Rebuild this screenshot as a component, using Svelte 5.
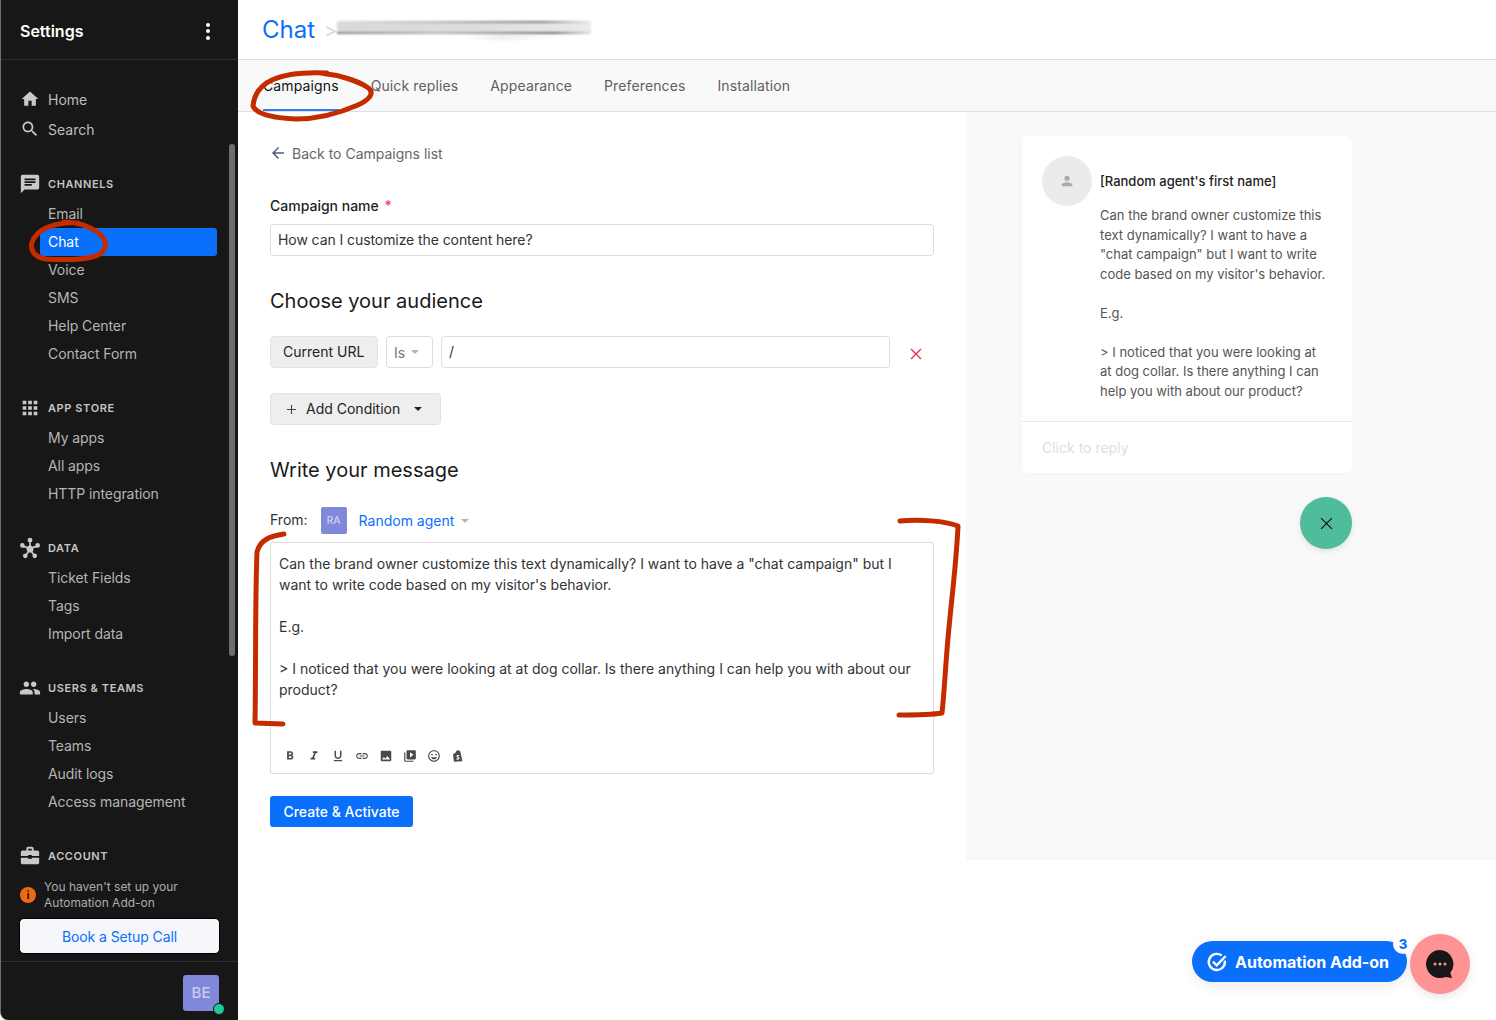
<script>
  const icons = {
    home: "M10 20v-6h4v6h5v-8h3L12 3 2 12h3v8z",
    search: "M15.5 14h-.79l-.28-.27C15.41 12.59 16 11.11 16 9.5 16 5.91 13.09 3 9.5 3S3 5.91 3 9.5 5.91 16 9.5 16c1.61 0 3.09-.59 4.23-1.57l.27.28v.79l5 4.99L20.49 19l-4.99-5zm-6 0C7.01 14 5 11.99 5 9.5S7.01 5 9.5 5 14 7.01 14 9.5 11.99 14 9.5 14z",
    chat: "M20 2H4c-1.1 0-1.99.9-1.99 2L2 22l4-4h14c1.1 0 2-.9 2-2V4c0-1.1-.9-2-2-2zM6 9h12v2H6V9zm8 5H6v-2h8v2zm4-6H6V6h12v2z",
    apps: "M4 8h4V4H4v4zm6 12h4v-4h-4v4zm-6 0h4v-4H4v4zm0-6h4v-4H4v4zm6 0h4v-4h-4v4zm6-10v4h4V4h-4zm-6 4h4V4h-4v4zm6 6h4v-4h-4v4zm0 6h4v-4h-4v4z",
    data: "M9.7 4.6a2.3 2.3 0 1 1 4.6 0a2.3 2.3 0 1 1-4.6 0zM2.5 9.5a2.2 2.2 0 1 1 4.4 0a2.2 2.2 0 1 1-4.4 0zM17.1 9.5a2.2 2.2 0 1 1 4.4 0a2.2 2.2 0 1 1-4.4 0zM5.3 19.5a2.2 2.2 0 1 1 4.4 0a2.2 2.2 0 1 1-4.4 0zM14.3 19.5a2.2 2.2 0 1 1 4.4 0a2.2 2.2 0 1 1-4.4 0zM11.2 5h1.6v6h-1.6zM5 9l5 2-.6 1.5-5-2zM19 9l.6 1.5-5 2-.6-1.5zM9.7 15.3l1.3.9-2.3 3.2-1.3-.9zM13 16.2l1.3-.9 2.3 3.2-1.3.9zM12 9l3.8 2.8-1.4 4.5h-4.8l-1.4-4.5z",
    people: "M16 11c1.66 0 2.99-1.34 2.99-3S17.66 5 16 5c-1.66 0-3 1.34-3 3s1.34 3 3 3zm-8 0c1.66 0 2.99-1.34 2.99-3S9.66 5 8 5C6.34 5 5 6.34 5 8s1.34 3 3 3zm0 2c-2.33 0-7 1.17-7 3.5V19h14v-2.5c0-2.33-4.67-3.5-7-3.5zm8 0c-.29 0-.62.02-.97.05 1.16.84 1.97 1.97 1.97 3.45V19h6v-2.5c0-2.33-4.67-3.5-7-3.5z",
    work: "M20 6h-4V4c0-1.11-.89-2-2-2h-4c-1.11 0-2 .89-2 2v2H4C2.89 6 2 6.89 2 8v4h8v-1h4v1h8V8c0-1.11-.89-2-2-2zm-6 0h-4V4h4v2zM14 14v1h-4v-1H2v5c0 1.11.89 2 2 2h16c1.11 0 2-.89 2-2v-5z",
    person: "M12 12c2.21 0 4-1.79 4-4s-1.79-4-4-4-4 1.79-4 4 1.79 4 4 4zm0 2c-2.67 0-8 1.34-8 4v2h16v-2c0-2.66-5.33-4-8-4z"
  };

  const tools = [
    "M15.6 10.79c.97-.67 1.65-1.77 1.65-2.79 0-2.26-1.75-4-4-4H7v14h7.04c2.09 0 3.71-1.7 3.71-3.79 0-1.52-.86-2.82-2.15-3.42zM10 6.5h3c.83 0 1.5.67 1.5 1.5s-.67 1.5-1.5 1.5h-3v-3zm3.5 9H10v-3h3.5c.83 0 1.5.67 1.5 1.5s-.67 1.5-1.5 1.5z",
    "M10 4v3h2.21l-3.42 8H6v3h8v-3h-2.21l3.42-8H18V4z",
    "M12 17c3.31 0 6-2.69 6-6V3h-2.5v8c0 1.93-1.57 3.5-3.5 3.5S8.5 12.93 8.5 11V3H6v8c0 3.31 2.69 6 6 6zm-7 2v2h14v-2H5z",
    "M3.9 12c0-1.71 1.39-3.1 3.1-3.1h4V7H7c-2.76 0-5 2.24-5 5s2.24 5 5 5h4v-1.9H7c-1.71 0-3.1-1.39-3.1-3.1zM8 13h8v-2H8v2zm9-6h-4v1.9h4c1.71 0 3.1 1.39 3.1 3.1s-1.39 3.1-3.1 3.1h-4V17h4c2.76 0 5-2.24 5-5s-2.24-5-5-5z",
    "M21 19V5c0-1.1-.9-2-2-2H5c-1.1 0-2 .9-2 2v14c0 1.1.9 2 2 2h14c1.1 0 2-.9 2-2zM8.5 13.5l2.5 3.01L14.5 12l4.5 6H5l3.5-4.5z",
    "M4 6H2v14c0 1.1.9 2 2 2h14v-2H4V6zm16-4H8c-1.1 0-2 .9-2 2v12c0 1.1.9 2 2 2h12c1.1 0 2-.9 2-2V4c0-1.1-.9-2-2-2zm-8 12.5v-9l6 4.5-6 4.5z",
    "M11.99 2C6.47 2 2 6.48 2 12s4.47 10 9.99 10C17.52 22 22 17.52 22 12S17.52 2 11.99 2zM12 20c-4.42 0-8-3.58-8-8s3.58-8 8-8 8 3.58 8 8-3.58 8-8 8zm3.5-9a1.5 1.5 0 1 0 0-3 1.5 1.5 0 0 0 0 3zm-7 0a1.5 1.5 0 1 0 0-3 1.5 1.5 0 0 0 0 3zm3.5 6.5c2.33 0 4.31-1.46 5.11-3.5H6.89c.8 2.04 2.78 3.5 5.11 3.5z",
    "M4.5 8l3-1C8 4 10 2 12 2c1.4 0 2.2.8 2.6 2l1.4-.3L19.5 21 5 22 3.5 9.5zM9.7 6.3c.5-1.5 1.3-2.5 2.3-2.5.8 0 1.1.8 1.1 1.5zM14.5 10.5c-2.8-1-5-.1-5 2 0 2.2 3 2.2 3 3.3 0 .8-1.6.7-2.9 0l-.5 2c2.8 1.3 5.5.3 5.5-2.2 0-2.2-2.9-2.3-2.9-3.2 0-.6 1-.7 2.3-.2z"
  ];

  const sections = [
    { title: "CHANNELS", icon: "chat", items: ["Email", "Chat", "Voice", "SMS", "Help Center", "Contact Form"] },
    { title: "APP STORE", icon: "apps", items: ["My apps", "All apps", "HTTP integration"] },
    { title: "DATA", icon: "data", items: ["Ticket Fields", "Tags", "Import data"] },
    { title: "USERS & TEAMS", icon: "people", items: ["Users", "Teams", "Audit logs", "Access management"] }
  ];

  const tabs = ["Campaigns", "Quick replies", "Appearance", "Preferences", "Installation"];
  const message = "Can the brand owner customize this text dynamically? I want to have a \"chat campaign\" but I want to write code based on my visitor's behavior.\n\nE.g.\n\n> I noticed that you were looking at at dog collar. Is there anything I can help you with about our product?";
</script>

<div class="page">
  <aside class="sidebar">
    <div class="side-head">
      <span class="side-title">Settings</span>
      <span class="dots"><i></i><i></i><i></i></span>
    </div>

    <nav class="side-nav">
      <div class="top-links">
        <div class="top-link"><svg viewBox="0 0 24 24"><path d={icons.home} /></svg>Home</div>
        <div class="top-link"><svg viewBox="0 0 24 24"><path d={icons.search} /></svg>Search</div>
      </div>

      {#each sections as section}
        <div class="section">
          <div class="section-title">
            <svg viewBox={section.icon === "data" ? "1.5 1.5 21 21" : "0 0 24 24"}><path d={icons[section.icon]} /></svg>{section.title}
          </div>
          {#each section.items as item}
            <div class="nav-item" class:active={item === "Chat"}>{item}</div>
          {/each}
        </div>
      {/each}

      <div class="section account">
        <div class="section-title"><svg viewBox="0 0 24 24"><path d={icons.work} /></svg>ACCOUNT</div>
      </div>
    </nav>

    <div class="setup-note">
      <span class="info">i</span>
      <span>You haven't set up your<br />Automation Add-on</span>
    </div>
    <button class="setup-btn">Book a Setup Call</button>

    <div class="side-foot">
      <div class="me">BE<span class="online"></span></div>
    </div>

    <div class="scroll-thumb"></div>
  </aside>

  <main class="main">
    <header class="top">
      <span class="crumb">Chat</span>
      <span class="crumb-sep">&gt;</span>
      <span class="redacted"></span>
    </header>

    <div class="tabs">
      {#each tabs as tab, i}
        <div class="tab" class:selected={i === 0}>{tab}</div>
      {/each}
    </div>

    <div class="split">
      <section class="form">
        <div class="back">
          <svg viewBox="0 0 24 24"><path d="M20 11H7.83l5.59-5.59L12 4l-8 8 8 8 1.41-1.41L7.83 13H20z" /></svg>
          Back to Campaigns list
        </div>

        <div class="label">Campaign name <span class="req">*</span></div>
        <div class="input name">How can I customize the content here?</div>

        <h2 class="audience">Choose your audience</h2>

        <div class="cond">
          <div class="chip url">Current URL</div>
          <div class="select">Is<span class="caret grey"></span></div>
          <div class="input slash">/</div>
          <svg class="remove" viewBox="0 0 12 12"><path d="M1 1l10 10M11 1L1 11" /></svg>
        </div>

        <div class="chip add">
          <svg viewBox="0 0 12 12"><path d="M6 1v10M1 6h10" /></svg>
          Add Condition
          <span class="caret dark"></span>
        </div>

        <h2 class="write">Write your message</h2>

        <div class="from">
          <span class="from-label">From:</span>
          <span class="agent">RA</span>
          <span class="agent-name">Random agent</span>
          <span class="caret grey"></span>
        </div>

        <div class="editor">
          <div class="editor-text">{message}</div>
          <div class="toolbar">
            {#each tools as d}
              <svg viewBox="0 0 24 24"><path {d} /></svg>
            {/each}
          </div>
        </div>

        <button class="create">Create &amp; Activate</button>
      </section>

      <section class="preview">
        <div class="card">
          <div class="card-body">
            <div class="avatar"><svg viewBox="0 0 24 24"><path d={icons.person} /></svg></div>
            <div class="bubble">
              <div class="agent-first">[Random agent's first name]</div>
              <div class="bubble-text">{message}</div>
            </div>
          </div>
          <div class="reply">Click to reply</div>
        </div>
        <div class="close-wrap">
          <div class="close">
            <svg viewBox="0 0 12 12"><path d="M1 1l10 10M11 1L1 11" /></svg>
          </div>
        </div>
      </section>
    </div>
  </main>

  <div class="addon">
    <svg viewBox="0 0 24 24">
      <path d="M20.5 10.5a8.8 8.8 0 1 1-3.4-5.6" />
      <path d="M7.5 11.5l4.2 4.2L21.5 5.5" />
    </svg>
    Automation Add-on
    <span class="badge">3</span>
  </div>
  <div class="launcher">
    <svg viewBox="0 0 28 28">
      <path class="bub" d="M14 0a14 14 0 1 0 5.5 26.9L26 28l-1.7-5.300A14 14 0 0 0 14 0z" />
      <circle cx="9" cy="14" r="1.5" /><circle cx="14" cy="14" r="1.5" /><circle cx="19" cy="14" r="1.5" />
    </svg>
  </div>

  <svg class="scribbles" viewBox="0 0 1496 1020">
    <path d="M327 73C305 72 285 74 272 80C259 86 254 96 253 106C256 114 270 118 296 119C318 119 342 112 358 105C371 99 375 92 367 87C358 81 340 75 320 73" />
    <path d="M78 223C60 222 42 226 34 238C28 248 33 257 46 259C62 260 80 260 92 257C104 254 108 247 104 239C98 229 80 222 64 222" />
    <path d="M284 534C270 536 260 540 257 552C255 600 256 670 255 723L283 724" />
    <path d="M900 521C920 519 945 521 958 526C956 570 950 610 947 650C945 675 944 695 942 713C930 715 915 715 899 715" />
  </svg>
</div>

<style>
  :global(body) {
    margin: 0;
    background: #fff;
    font-family: Inter, "Noto Sans", sans-serif;
  }

  .page {
    display: flex;
    position: relative;
    width: 1496px;
    height: 1020px;
    overflow: hidden;
    color: #1f1f1f;
  }

  .sidebar {
    position: relative;
    display: flex;
    flex-direction: column;
    flex: 0 0 238px;
    box-sizing: border-box;
    height: 1020px;
    background: #171717;
    border-left: 1px solid #6e6e6e;
    border-bottom-left-radius: 8px;
  }

  .side-head {
    display: flex;
    align-items: center;
    justify-content: space-between;
    box-sizing: border-box;
    height: 60px;
    padding: 3px 28px 0 19px;
    border-bottom: 1px solid #2e2e2e;
  }

  .side-title {
    color: #fff;
    font-size: 16px;
    font-weight: 600;
  }

  .dots {
    display: flex;
    flex-direction: column;
    gap: 2.5px;
  }

  .dots i {
    width: 4px;
    height: 4px;
    border-radius: 50%;
    background: #fff;
  }

  .side-nav {
    flex: 1;
    min-height: 0;
    padding-top: 24px;
  }

  .top-links {
    margin-bottom: 26px;
  }

  .top-link {
    display: flex;
    align-items: center;
    height: 30px;
    padding-left: 20px;
    color: #bdbdbd;
    font-size: 14px;
  }

  .top-link svg {
    width: 20px;
    height: 20px;
    margin: 0 8px 0 -1px;
    fill: #c9c9c9;
    flex: none;
  }

  .section-title svg {
    width: 22px;
    height: 22px;
    margin: 0 7px 0 -2px;
    fill: #c9c9c9;
    flex: none;
  }

  .section {
    margin-bottom: 26px;
  }

  .section.account {
    margin-bottom: 0;
  }

  .section-title {
    display: flex;
    align-items: center;
    height: 28px;
    margin-bottom: 2px;
    padding-left: 20px;
    color: #c4c4c4;
    font-size: 11px;
    font-weight: 600;
    letter-spacing: 0.6px;
  }

  .nav-item {
    height: 28px;
    width: 177px;
    margin-left: 39px;
    padding-left: 8px;
    box-sizing: border-box;
    border-radius: 3px;
    color: #b5b5b5;
    font-size: 14px;
    line-height: 28px;
    letter-spacing: -0.08px;
  }

  .nav-item.active {
    background: #0a6ffb;
    color: #fff;
  }

  .setup-note {
    display: flex;
    align-items: center;
    gap: 8px;
    padding-left: 19px;
    color: #a9adb5;
    font-size: 12px;
    line-height: 16px;
  }

  .info {
    flex: none;
    width: 16px;
    height: 16px;
    border-radius: 50%;
    background: #ee6a12;
    color: #171717;
    font-size: 11px;
    font-weight: 700;
    line-height: 16px;
    text-align: center;
  }

  .setup-btn {
    display: block;
    width: 201px;
    height: 36px;
    margin: 7px 0 7px 18px;
    padding: 0;
    border: 1px solid #000;
    border-radius: 5px;
    background: #f5f7fa;
    color: #0a6ffb;
    font: 14px Inter, sans-serif;
    letter-spacing: -0.1px;
  }

  .side-foot {
    display: flex;
    align-items: center;
    justify-content: flex-end;
    height: 58px;
    padding: 0 19px 0 20px;
    border-top: 1px solid #2e2e2e;
  }

  .me {
    position: relative;
    width: 36px;
    height: 36px;
    margin-top: 4px;
    border-radius: 3px;
    background: #7f88d9;
    color: #c9cdf0;
    font-size: 15px;
    font-weight: 500;
    line-height: 36px;
    text-align: center;
  }

  .online {
    position: absolute;
    right: -6px;
    bottom: -4px;
    width: 10px;
    height: 10px;
    border: 1px solid #171717;
    border-radius: 50%;
    background: #20c997;
  }

  .scroll-thumb {
    position: absolute;
    left: 228px;
    top: 144px;
    width: 6px;
    height: 512px;
    border-radius: 3px;
    background: #6d6d6d;
  }

  .main {
    flex: 1;
    min-width: 0;
    display: flex;
    flex-direction: column;
  }

  .top {
    display: flex;
    align-items: center;
    box-sizing: border-box;
    height: 60px;
    padding: 0 0 0 24px;
    border-bottom: 1px solid #dfdfdf;
  }

  .crumb {
    color: #0a6ffb;
    font-size: 24px;
  }

  .crumb-sep {
    margin-left: 9px;
    color: #d8d8d8;
    font-size: 20px;
  }

  .redacted {
    width: 254px;
    height: 22px;
    background:
      linear-gradient(90deg, rgba(190, 190, 190, 0.5), rgba(120, 120, 120, 0.55) 40%, rgba(90, 90, 90, 0.8) 80%, rgba(190, 190, 190, 0.3) 100%) 0 2px / 100% 2px no-repeat,
      linear-gradient(90deg, rgba(215, 215, 215, 0.95), rgba(205, 205, 205, 0.7) 50%, rgba(225, 225, 225, 0.7)) 0 4px / 100% 9px no-repeat,
      linear-gradient(90deg, rgba(120, 120, 120, 0.9), rgba(150, 150, 150, 0.7) 40%, rgba(90, 90, 90, 0.9) 85%, rgba(190, 190, 190, 0.5)) 0 13px / 100% 2px no-repeat,
      linear-gradient(90deg, transparent 50%, rgba(220, 220, 220, 0.5) 65%, transparent 85%) 0 16px / 100% 5px no-repeat;
    filter: blur(0.8px);
  }

  .tabs {
    display: flex;
    gap: 32px;
    box-sizing: border-box;
    height: 52px;
    padding-left: 25px;
    background: #f9f9f9;
    border-bottom: 1px solid #dfdfdf;
  }

  .tab {
    height: 51px;
    box-sizing: border-box;
    color: #5f5f5f;
    font-size: 14px;
    line-height: 52px;
    letter-spacing: 0.12px;
  }

  .tab.selected {
    color: #111;
    border-bottom: 2px solid #2f7bf6;
  }

  .split {
    display: flex;
    height: 748px;
  }

  .form {
    flex: 0 0 728px;
    box-sizing: border-box;
    padding: 32px 32px 0;
    background: #fff;
  }

  .back {
    display: flex;
    align-items: center;
    height: 20px;
    margin-top: -1px;
    color: #666;
    font-size: 14px;
  }

  .back svg {
    width: 18px;
    height: 18px;
    margin: 0 5px 0 -1px;
    fill: #4d5f80;
  }

  .label {
    margin-top: 33px;
    color: #1f1f1f;
    font-size: 14px;
    font-weight: 500;
    line-height: 20px;
  }

  .req {
    color: #f0476c;
    margin-left: 2px;
  }

  .input {
    box-sizing: border-box;
    height: 32px;
    margin-top: 8px;
    padding: 0 7px;
    border: 1px solid #dcdcdc;
    border-radius: 4px;
    color: #333;
    font-size: 14px;
    line-height: 30px;
  }

  .input.name {
    letter-spacing: -0.08px;
  }

  h2 {
    margin: 0;
    color: #1a1a1a;
    font-size: 20px;
    font-weight: 400;
    line-height: 26px;
  }

  .audience {
    margin-top: 32px;
  }

  .write {
    margin-top: 32px;
  }

  .cond {
    display: flex;
    align-items: center;
    gap: 8px;
    margin-top: 22px;
  }

  .chip {
    box-sizing: border-box;
    height: 32px;
    padding: 0 12px;
    border: 1px solid #e2e2e2;
    border-radius: 4px;
    background: #eee;
    color: #222;
    font-size: 14px;
    line-height: 30px;
  }

  .chip.url {
    width: 108px;
  }

  .select {
    display: flex;
    align-items: center;
    gap: 6px;
    box-sizing: border-box;
    width: 47px;
    height: 32px;
    padding-left: 7px;
    border: 1px solid #dcdcdc;
    border-radius: 4px;
    color: #777;
    font-size: 14px;
  }

  .caret {
    display: inline-block;
    width: 0;
    height: 0;
    border-left: 4px solid transparent;
    border-right: 4px solid transparent;
    border-top: 4px solid;
  }

  .caret.grey {
    color: #b5b5b5;
  }

  .caret.dark {
    color: #222;
  }

  .slash {
    flex: 0 0 449px;
    margin-top: 0;
  }

  .remove {
    width: 12px;
    height: 12px;
    margin: 4px 0 0 12px;
    fill: none;
    stroke: #ee2c4f;
    stroke-width: 1.4;
  }

  .add {
    display: flex;
    align-items: center;
    width: 171px;
    margin-top: 25px;
    padding-left: 15px;
  }

  .add svg {
    width: 11px;
    height: 11px;
    margin-right: 9px;
    fill: none;
    stroke: #444;
    stroke-width: 1.2;
  }

  .add .caret {
    margin-left: 14px;
  }

  .from {
    display: flex;
    align-items: center;
    margin-top: 24px;
    height: 27px;
    font-size: 14px;
  }

  .from-label {
    color: #333;
    margin-top: -2px;
  }

  .agent {
    width: 26px;
    height: 27px;
    margin-left: 13px;
    border-radius: 2px;
    background: #7f88d9;
    color: #c6cbf2;
    font-size: 10px;
    font-weight: 600;
    line-height: 27px;
    text-align: center;
  }

  .agent-name {
    margin: 0 7px 0 12px;
    color: #0a6ffb;
  }

  .editor {
    box-sizing: border-box;
    height: 232px;
    margin-top: 8px;
    padding: 10px 8px 0;
    border: 1px solid #dcdcdc;
    border-radius: 3px;
  }

  .editor-text {
    height: 196px;
    color: #333;
    font-size: 14px;
    line-height: 21px;
    white-space: pre-wrap;
  }

  .toolbar {
    display: flex;
    gap: 10px;
    padding-left: 4px;
  }

  .toolbar svg {
    width: 14px;
    height: 14px;
    fill: #4a4a4a;
  }

  .create {
    display: block;
    width: 143px;
    height: 31px;
    margin-top: 22px;
    padding: 0;
    border: none;
    border-radius: 3px;
    background: #0a6ffb;
    color: #fff;
    font: 500 14px Inter, sans-serif;
  }

  .preview {
    flex: 1;
    box-sizing: border-box;
    padding: 24px 144px 0 56px;
    background: #f9f9f9;
  }

  .card {
    border-radius: 6px;
    background: #fff;
    box-shadow: 0 2px 10px rgba(0, 0, 0, 0.02);
  }

  .card-body {
    display: flex;
    padding: 20px 24px 20px 20px;
    border-bottom: 1px solid #e9e9e9;
  }

  .avatar {
    display: flex;
    align-items: center;
    justify-content: center;
    flex: none;
    width: 50px;
    height: 50px;
    border-radius: 50%;
    background: #ebebeb;
  }

  .avatar svg {
    width: 16px;
    height: 16px;
    fill: #aaa;
  }

  .bubble {
    margin-left: 8px;
    padding-top: 16px;
  }

  .agent-first {
    color: #222;
    font-size: 13px;
    font-weight: 500;
    line-height: 18px;
  }

  .bubble-text {
    margin-top: 16px;
    color: #555;
    font-size: 13px;
    line-height: 19.5px;
    white-space: pre-wrap;
  }

  .reply {
    height: 51px;
    padding-left: 20px;
    color: #dedede;
    font-size: 14px;
    line-height: 51px;
  }

  .close-wrap {
    display: flex;
    justify-content: flex-end;
    margin-top: 24px;
  }

  .close {
    display: flex;
    align-items: center;
    justify-content: center;
    width: 52px;
    height: 52px;
    border-radius: 50%;
    background: #4fbd9c;
    box-shadow: 0 2px 6px rgba(0, 0, 0, 0.1);
  }

  .close svg {
    width: 13px;
    height: 13px;
    fill: none;
    stroke: #111;
    stroke-width: 1.1;
  }

  .addon {
    position: absolute;
    left: 1192px;
    top: 941px;
    display: flex;
    align-items: center;
    box-sizing: border-box;
    width: 215px;
    height: 41px;
    padding-left: 14px;
    border-radius: 21px;
    background: #0a6ffb;
    box-shadow: 0 4px 14px rgba(0, 0, 0, 0.08);
    color: #fff;
    font-size: 16px;
    font-weight: 700;
  }

  .addon svg {
    width: 22px;
    height: 22px;
    margin-right: 7px;
    fill: none;
    stroke: #fff;
    stroke-width: 2.6;
  }

  .badge {
    position: absolute;
    right: -6px;
    top: -7px;
    width: 20px;
    height: 20px;
    border-radius: 50%;
    background: #fff;
    color: #0a6ffb;
    font-size: 13px;
    font-weight: 800;
    line-height: 20px;
    text-align: center;
  }

  .launcher {
    position: absolute;
    left: 1410px;
    top: 934px;
    display: flex;
    align-items: center;
    justify-content: center;
    width: 60px;
    height: 60px;
    border-radius: 50%;
    background: #ff9292;
    box-shadow: 0 3px 10px rgba(0, 0, 0, 0.1);
  }

  .launcher svg {
    width: 28px;
    height: 28px;
    fill: #ff9292;
  }

  .launcher .bub {
    fill: #171717;
  }

  .scribbles {
    position: absolute;
    inset: 0;
    width: 1496px;
    height: 1020px;
    pointer-events: none;
    fill: none;
    stroke: #c42c00;
    stroke-width: 5;
    stroke-linecap: round;
    stroke-linejoin: round;
  }
</style>
